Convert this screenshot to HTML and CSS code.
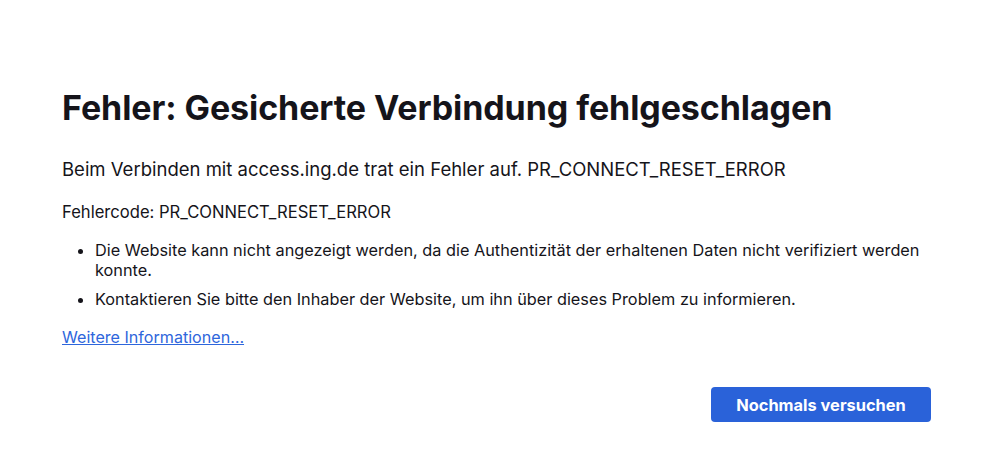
FILE: index.html
```html
<!DOCTYPE html>
<html lang="de">
<head>
<meta charset="utf-8">
<title>Fehler: Gesicherte Verbindung fehlgeschlagen</title>
<link rel="stylesheet" href="styles.css">
</head>
<body>
<main class="container">
  <h1 class="title">Fehler: Gesicherte Verbindung fehlgeschlagen</h1>
  <p class="intro">Beim Verbinden mit access.ing.de trat ein Fehler auf. PR_CONNECT_RESET_ERROR</p>
  <p class="code">Fehlercode: PR_CONNECT_RESET_ERROR</p>
  <ul class="list">
    <li>Die Website kann nicht angezeigt werden, da die Authentizität der erhaltenen Daten nicht verifiziert werden konnte.</li>
    <li>Kontaktieren Sie bitte den Inhaber der Website, um ihn über dieses Problem zu informieren.</li>
  </ul>
  <a class="more" href="#">Weitere Informationen…</a>
  <div class="actions">
    <button class="retry" type="button">Nochmals versuchen</button>
  </div>
</main>
</body>
</html>
```
FILE: styles.css
```css
html, body {
  margin: 0;
  padding: 0;
  background: #ffffff;
}
body {
  font-family: Inter, "Liberation Sans", sans-serif;
  color: #15141a;
}
.container {
  width: 869px;
  padding: 87px 0 0 62px;
  box-sizing: content-box;
}
.title {
  margin: 0;
  font-size: 34px;
  line-height: 42px;
  font-weight: 700;
  letter-spacing: -0.08px;
}
.intro {
  margin: 28px 0 0;
  font-size: 18.5px;
  line-height: 24px;
}
.code {
  margin: 20px 0 0;
  font-size: 16.6px;
  line-height: 22px;
}
.list {
  margin: 17px 0 0;
  padding-left: 33px;
  font-size: 16.3px;
  line-height: 20px;
}
.list li + li {
  margin-top: 9px;
}
.more {
  display: inline-block;
  margin-top: 18px;
  font-size: 16.1px;
  line-height: 20px;
  color: #2e66dc;
  text-decoration: underline;
}
.actions {
  display: flex;
  justify-content: flex-end;
  margin-top: 40px;
}
.retry {
  width: 220px;
  height: 35px;
  border: none;
  border-radius: 4px;
  background: #2a62d9;
  color: #ffffff;
  font-family: Inter, "Liberation Sans", sans-serif;
  font-size: 16.4px;
  font-weight: 700;
}
```
